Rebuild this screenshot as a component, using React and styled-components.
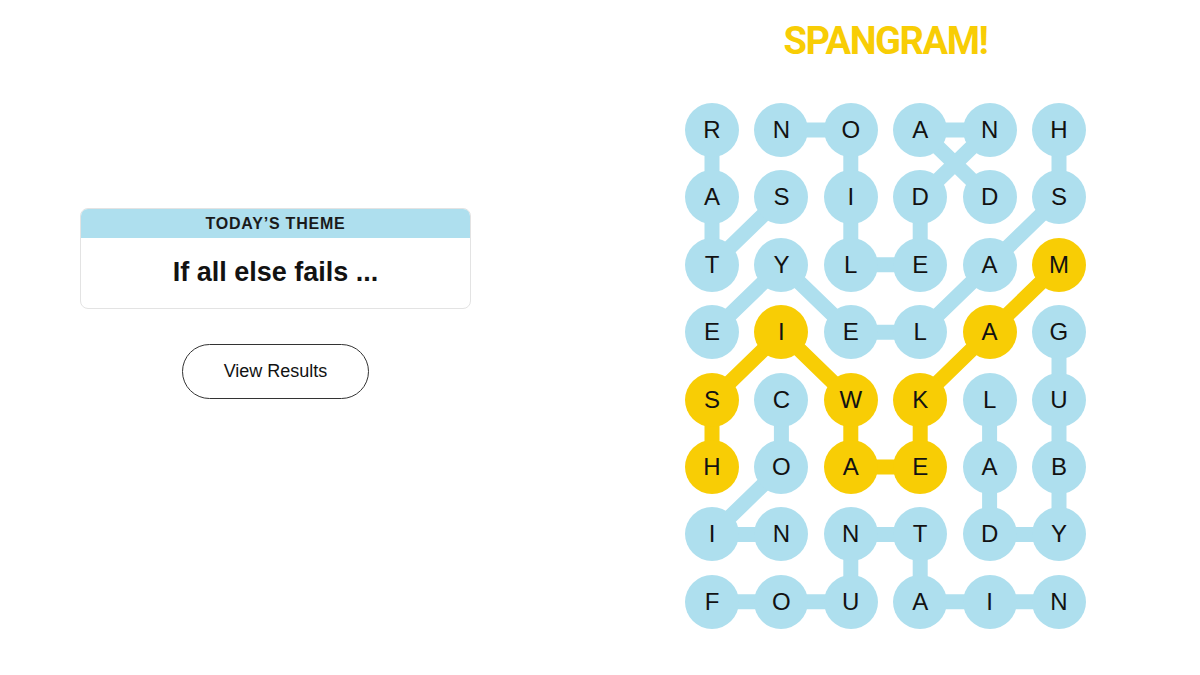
import React from 'react'
import styled, { createGlobalStyle } from 'styled-components'

const BLUE = '#aedfee'
const YELLOW = '#f8cd05'

const COL = 69.4
const ROW = 67.4
const SIZE = 54

const GlobalStyle = createGlobalStyle`
  html, body {
    margin: 0;
    padding: 0;
    background: #fff;
  }
  body {
    font-family: "Liberation Sans", Arial, sans-serif;
    color: #121212;
  }
`

const Page = styled.main`
  width: 1200px;
  height: 675px;
  display: flex;
  align-items: flex-start;
  overflow: hidden;
`

const LeftPanel = styled.section`
  width: 391px;
  margin-left: 80px;
  padding-top: 208px;
  display: flex;
  flex-direction: column;
  align-items: center;
`

const ThemeCard = styled.div`
  width: 100%;
  box-sizing: border-box;
  border: 1px solid #e3e3e3;
  border-radius: 8px;
  overflow: hidden;
  background: #fff;
`

const ThemeHeader = styled.div`
  background: ${BLUE};
  height: 29px;
  display: flex;
  align-items: center;
  justify-content: center;
  font-size: 16px;
  font-weight: 700;
  letter-spacing: 0.8px;
  color: #1a1a1a;
`

const ThemeText = styled.div`
  height: 68px;
  display: flex;
  align-items: center;
  justify-content: center;
  font-size: 27px;
  font-weight: 700;
  color: #121212;
  padding-bottom: 2px;
`

const ResultsButton = styled.button`
  margin-top: 35px;
  width: 187px;
  height: 55px;
  border: 1px solid #333;
  border-radius: 28px;
  background: #fff;
  font-family: "Liberation Sans", Arial, sans-serif;
  font-size: 18px;
  color: #121212;
  cursor: pointer;
`

const RightPanel = styled.section`
  margin-left: 214px;
  display: flex;
  flex-direction: column;
  align-items: center;
`

const Title = styled.h1`
  margin: 19px 0 0;
  height: 84px;
  font-family: Roboto, "Liberation Sans", sans-serif;
  font-size: 38px;
  line-height: 44px;
  font-weight: 700;
  letter-spacing: -1.4px;
  color: ${YELLOW};
`

const Board = styled.div`
  position: relative;
  display: grid;
  grid-template-columns: repeat(6, ${SIZE}px);
  grid-auto-rows: ${SIZE}px;
  column-gap: ${COL - SIZE}px;
  row-gap: ${ROW - SIZE}px;
`

const Links = styled.svg`
  position: absolute;
  left: 0;
  top: 0;
  z-index: 0;
  overflow: visible;
`

const Cell = styled.button`
  position: relative;
  z-index: 1;
  width: ${SIZE}px;
  height: ${SIZE}px;
  border: none;
  border-radius: 50%;
  padding: 0;
  background: ${(p) => (p.$spangram ? YELLOW : BLUE)};
  font-family: "Liberation Sans", Arial, sans-serif;
  font-size: 24px;
  color: #121212;
  display: flex;
  align-items: center;
  justify-content: center;
`

const letters = [
  'RNOANH',
  'ASIDDS',
  'TYLEAM',
  'EIELAG',
  'SCWKLU',
  'HOAEAB',
  'INNTDY',
  'FOUAIN',
]

const words = [
  { name: 'DANDELION', path: [[1, 4], [0, 3], [0, 4], [1, 3], [2, 3], [2, 2], [1, 2], [0, 2], [0, 1]] },
  { name: 'STAR', path: [[1, 1], [2, 0], [1, 0], [0, 0]] },
  { name: 'EYELASH', path: [[3, 0], [2, 1], [3, 2], [3, 3], [2, 4], [1, 5], [0, 5]] },
  { name: 'COIN', path: [[4, 1], [5, 1], [6, 0], [6, 1]] },
  { name: 'FOUNTAIN', path: [[7, 0], [7, 1], [7, 2], [6, 2], [6, 3], [7, 3], [7, 4], [7, 5]] },
  { name: 'LADYBUG', path: [[4, 4], [5, 4], [6, 4], [6, 5], [5, 5], [4, 5], [3, 5]] },
  { name: 'MAKEAWISH', spangram: true, path: [[2, 5], [3, 4], [4, 3], [5, 3], [5, 2], [4, 2], [3, 1], [4, 0], [5, 0]] },
]

const spanCells = new Set(
  words.filter((w) => w.spangram).flatMap((w) => w.path.map(([r, c]) => `${r}-${c}`))
)

const center = ([r, c]) => `${SIZE / 2 + c * COL},${SIZE / 2 + r * ROW}`

function App() {
  const width = SIZE + 5 * COL
  const height = SIZE + 7 * ROW
  return (
    <>
      <GlobalStyle />
      <Page>
        <LeftPanel>
          <ThemeCard>
            <ThemeHeader>TODAY’S THEME</ThemeHeader>
            <ThemeText>If all else fails ...</ThemeText>
          </ThemeCard>
          <ResultsButton>View Results</ResultsButton>
        </LeftPanel>
        <RightPanel>
          <Title>SPANGRAM!</Title>
          <Board>
            <Links width={width} height={height} viewBox={`0 0 ${width} ${height}`}>
              {words.map((w) => (
                <polyline
                  key={w.name}
                  points={w.path.map(center).join(' ')}
                  fill="none"
                  stroke={w.spangram ? YELLOW : BLUE}
                  strokeWidth="15"
                  strokeLinecap="round"
                  strokeLinejoin="round"
                />
              ))}
            </Links>
            {letters.map((row, r) =>
              row.split('').map((ch, c) => (
                <Cell key={`${r}-${c}`} $spangram={spanCells.has(`${r}-${c}`)}>
                  {ch}
                </Cell>
              ))
            )}
          </Board>
        </RightPanel>
      </Page>
    </>
  )
}

export default App
